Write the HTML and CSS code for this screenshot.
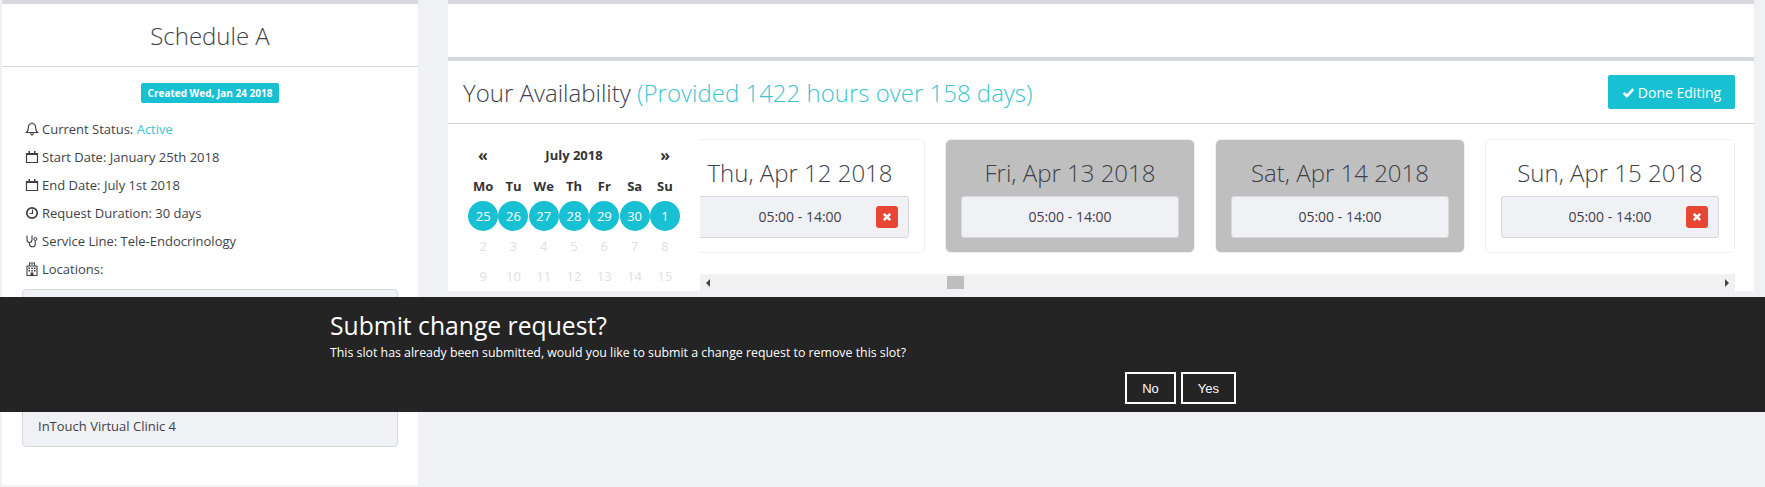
FILE: index.html
```html
<!DOCTYPE html>
<html lang="en">
<head>
  <meta charset="UTF-8">
  <title>Schedule A</title>
  <link rel="stylesheet" href="styles.css">
</head>
<body>
  <svg class="icon-defs" width="0" height="0">
    <symbol id="i-bell" viewBox="0 0 14 14"><path d="M7 1.500c-2.400 0-3.600 1.800-3.600 4 0 2.600-.7 3.800-2 5h11.200c-1.300-1.200-2-2.400-2-5 0-2.200-1.200-4-3.600-4zM5.700 11c.1 1.500.7 2.200 1.300 2.200s1.200-.7 1.300-2.200M7 .4v1.100" fill="none" stroke="currentColor" stroke-width="1.200"/></symbol>
    <symbol id="i-cal" viewBox="0 0 14 14"><path d="M1.500 3.500h11v9h-11z" fill="none" stroke="currentColor" stroke-width="1.200"/><path d="M1 3h12v2H1zM3.500 1h1.500v2H3.500zM9 1h1.500v2H9z" fill="currentColor"/></symbol>
    <symbol id="i-clock" viewBox="0 0 14 14"><circle cx="7" cy="7" r="5.200" fill="none" stroke="currentColor" stroke-width="1.700"/><path d="M7.500 3.500v4H4.500" fill="none" stroke="currentColor" stroke-width="1.200"/></symbol>
    <symbol id="i-steth" viewBox="0 0 14 14"><path d="M2 1.500v4c0 2 1.200 3 2.500 3s2.500-1 2.500-3v-4M4.500 8.500v1.500c0 1.800 1.200 2.800 3 2.800s2.800-1 2.800-2.800V6.500" fill="none" stroke="currentColor" stroke-width="1.100"/><circle cx="10.300" cy="5" r="1.500" fill="none" stroke="currentColor"/></symbol>
    <symbol id="i-hosp" viewBox="0 0 14 14"><path d="M2 4h10v9.500H2zM4.500 4V1h5v3" fill="none" stroke="currentColor" stroke-width="1.100"/><path d="M6.500 1.800h1v1.500h-1zM3.500 5.500h1.500V7H3.500zM6.300 5.500h1.500V7H6.300zM9 5.500h1.500V7H9zM3.500 8h1.500v1.500H3.500zM6.300 8h1.500v1.500H6.300zM9 8h1.500v1.500H9zM5.500 10.500h3V13h-3z" fill="currentColor"/></symbol>
    <symbol id="i-check" viewBox="0 0 14 14"><path d="M1.800 7.400 5.200 10.800 12.200 3.400" fill="none" stroke="currentColor" stroke-width="2.800"/></symbol>
    <symbol id="i-times" viewBox="0 0 10 10"><path d="M1.800 1.800l6.400 6.400M8.200 1.800 1.800 8.200" fill="none" stroke="currentColor" stroke-width="2.600"/></symbol>
  </svg>

  <div class="page">
    <aside class="panel summary">
      <h3 class="summary-title">Schedule A</h3>
      <div class="summary-body">
        <div class="badge-row"><span class="badge">Created Wed, Jan 24 2018</span></div>
        <ul class="facts">
          <li><svg class="icon"><use href="#i-bell"/></svg>Current Status:&nbsp;<span class="accent">Active</span></li>
          <li><svg class="icon"><use href="#i-cal"/></svg>Start Date: January 25th 2018</li>
          <li><svg class="icon"><use href="#i-cal"/></svg>End Date: July 1st 2018</li>
          <li><svg class="icon"><use href="#i-clock"/></svg>Request Duration: 30 days</li>
          <li><svg class="icon"><use href="#i-steth"/></svg>Service Line: Tele-Endocrinology</li>
          <li><svg class="icon"><use href="#i-hosp"/></svg>Locations:</li>
        </ul>
        <div class="locations">InTouch Virtual Clinic 4</div>
      </div>
    </aside>

    <main class="panel availability">
      <div class="avail-top"></div>
      <div class="avail-head">
        <h3 class="avail-title">Your Availability <span class="accent">(Provided 1422 hours over 158 days)</span></h3>
        <button class="btn-done"><svg class="icon-check"><use href="#i-check"/></svg>Done Editing</button>
      </div>
      <div class="avail-body">
        <div class="calendar">
          <div class="cal-nav"><b class="cal-arrow">«</b><b>July 2018</b><b class="cal-arrow">»</b></div>
          <div class="cal-grid">
            <b>Mo</b><b>Tu</b><b>We</b><b>Th</b><b>Fr</b><b>Sa</b><b>Su</b>
            <span class="on">25</span><span class="on">26</span><span class="on">27</span><span class="on">28</span><span class="on">29</span><span class="on">30</span><span class="on">1</span>
            <span>2</span><span>3</span><span>4</span><span>5</span><span>6</span><span>7</span><span>8</span>
            <span>9</span><span>10</span><span>11</span><span>12</span><span>13</span><span>14</span><span>15</span>
          </div>
        </div>
        <div class="days-wrap">
          <div class="days">
            <div class="day">
              <h4>Thu, Apr 12 2018</h4>
              <div class="slot">05:00 - 14:00<button class="slot-del"><svg class="icon-times"><use href="#i-times"/></svg></button></div>
            </div>
            <div class="day past">
              <h4>Fri, Apr 13 2018</h4>
              <div class="slot">05:00 - 14:00</div>
            </div>
            <div class="day past">
              <h4>Sat, Apr 14 2018</h4>
              <div class="slot">05:00 - 14:00</div>
            </div>
            <div class="day">
              <h4>Sun, Apr 15 2018</h4>
              <div class="slot">05:00 - 14:00<button class="slot-del"><svg class="icon-times"><use href="#i-times"/></svg></button></div>
            </div>
          </div>
          <div class="scrollbar">
            <i class="arrow-left"></i>
            <div class="thumb"></div>
            <i class="arrow-right"></i>
          </div>
        </div>
      </div>
    </main>
  </div>

  <div class="confirm">
    <div class="confirm-inner">
      <div class="confirm-title">Submit change request?</div>
      <div class="confirm-text">This slot has already been submitted, would you like to submit a change request to remove this slot?</div>
      <div class="confirm-btns">
        <button class="btn-line">No</button>
        <button class="btn-line">Yes</button>
      </div>
    </div>
  </div>
</body>
</html>
```

FILE: styles.css
```css
* {
  box-sizing: border-box;
}
html, body {
  height: 100%;
}
body {
  font-family: "Open Sans", sans-serif;
  font-size: 13px;
  color: #3f3f4a;
  background-color: #f0f1f5;
  margin: 0;
  overflow: hidden;
}
.icon-defs {
  display: block;
  height: 0;
}
.page {
  display: flex;
  align-items: flex-start;
  gap: 30px;
  padding-left: 2px;
}
.panel {
  background-color: #fff;
  border-top: 4px solid #d7d8dc;
}
.accent {
  color: #3cc5d0;
}

/* left panel */
.summary {
  width: 416px;
  height: 485px;
}
.summary-title {
  margin: 0;
  height: 63px;
  line-height: 64px;
  text-align: center;
  font-size: 24px;
  font-weight: 300;
  border-bottom: 1px solid #d7d8dc;
}
.summary-body {
  padding: 16px 20px 0;
}
.badge-row {
  text-align: center;
  height: 20px;
  margin-bottom: 12px;
}
.badge {
  display: inline-block;
  height: 20px;
  line-height: 20px;
  padding: 0 7px;
  font-size: 10px;
  font-weight: 700;
  color: #fff;
  background-color: #17c0d2;
  border-radius: 2px;
}
.facts {
  list-style: none;
  margin: 0 0 6px;
  padding: 0;
}
.facts li {
  display: flex;
  align-items: center;
  height: 28px;
  padding-left: 3px;
}
.icon {
  width: 14px;
  height: 14px;
  margin-right: 3px;
  flex: none;
}
.locations {
  display: flex;
  align-items: flex-end;
  height: 158px;
  padding: 0 15px 6px;
  line-height: 28px;
  background-color: #f0f1f5;
  border: 1px solid #d7d8dc;
  border-radius: 4px;
}

/* right panel */
.availability {
  width: 1306px;
  height: 291px;
}
.avail-top {
  height: 57px;
  border-bottom: 4px solid #d7d8dc;
}
.avail-head {
  display: flex;
  justify-content: space-between;
  align-items: center;
  height: 63px;
  padding: 0 19px 0 15px;
  border-bottom: 1px solid #d7d8dc;
}
.avail-title {
  margin: 0;
  font-size: 24px;
  font-weight: 300;
}
.btn-done {
  display: flex;
  align-items: center;
  justify-content: center;
  gap: 3px;
  width: 127px;
  height: 34px;
  padding: 0;
  font-family: inherit;
  font-size: 14px;
  color: #fff;
  background-color: #17c0d2;
  border: none;
  border-radius: 2px;
}
.icon-check {
  width: 13px;
  height: 13px;
}
.avail-body {
  display: flex;
  padding-left: 20px;
}

/* calendar */
.calendar {
  width: 232px;
  flex: none;
  font-size: 12px;
  padding-top: 20px;
}
.cal-nav {
  display: flex;
  justify-content: space-between;
  align-items: center;
  width: 212px;
  padding: 0 10px;
  font-size: 13px;
  height: 23px;
  line-height: 23px;
  color: #333;
}
.cal-arrow {
  font-size: 16px;
}
.cal-grid {
  display: grid;
  grid-template-columns: repeat(7, 30.300px);
  grid-auto-rows: 30px;
  align-items: center;
  justify-items: center;
  margin-top: 4px;
  color: #e0e0e3;
  font-size: 13px;
}
.cal-grid b {
  color: #333;
}
.cal-grid span {
  width: 30px;
  height: 30px;
  line-height: 30px;
  text-align: center;
  border-radius: 50%;
}
.cal-grid .on {
  color: #fff;
  background-color: #17c0d2;
}

/* day cards */
.days-wrap {
  width: 1035px;
  padding-top: 15px;
  overflow: hidden;
}
.days {
  display: flex;
  gap: 20px;
  margin-left: -25px;
}
.day {
  width: 250px;
  height: 114px;
  flex: none;
  padding: 0 15px;
  text-align: center;
  border: 1px solid #eeeef0;
  border-radius: 6px;
}
.day h4 {
  margin: 0;
  height: 56px;
  line-height: 66px;
  font-size: 24px;
  font-weight: 300;
}
.day.past {
  background-color: #bfbfbf;
}
.slot {
  position: relative;
  height: 42px;
  line-height: 40px;
  font-size: 14px;
  background-color: #f0f1f5;
  border: 1px solid #d7d8dc;
  border-radius: 3px;
}
.slot-del {
  position: absolute;
  top: 9px;
  right: 10px;
  display: flex;
  align-items: center;
  justify-content: center;
  width: 22px;
  height: 22px;
  padding: 0;
  color: #fff;
  background-color: #e74635;
  border: none;
  border-radius: 3px;
}
.icon-times {
  width: 10px;
  height: 10px;
}

/* horizontal scroller */
.scrollbar {
  display: flex;
  align-items: center;
  justify-content: space-between;
  position: relative;
  height: 17px;
  margin-top: 21px;
  padding: 0 6px;
  background-color: #f1f1f1;
}
.arrow-left {
  border-style: solid;
  border-width: 4px 4px 4px 0;
  border-color: transparent #444 transparent transparent;
}
.arrow-right {
  border-style: solid;
  border-width: 4px 0 4px 4px;
  border-color: transparent transparent transparent #444;
}
.thumb {
  position: absolute;
  left: 247px;
  top: 2px;
  width: 17px;
  height: 13px;
  background-color: #bdbdbd;
}

/* confirm bar */
.confirm {
  position: fixed;
  left: 0;
  right: 0;
  top: 297px;
  height: 115px;
  padding: 13px 0 0 330px;
  color: #fff;
  background-color: #242424;
}
.confirm-inner {
  width: 906px;
}
.confirm-title {
  font-size: 24.700px;
  line-height: 32px;
}
.confirm-text {
  margin-top: 2px;
  font-size: 12.350px;
  line-height: 17px;
}
.confirm-btns {
  display: flex;
  justify-content: flex-end;
  gap: 5px;
  margin-top: 11px;
}
.btn-line {
  height: 32px;
  padding: 0 15px;
  font-family: "Liberation Sans", sans-serif;
  font-size: 13px;
  color: #fff;
  background: transparent;
  border: 2px solid #fff;
}
```
